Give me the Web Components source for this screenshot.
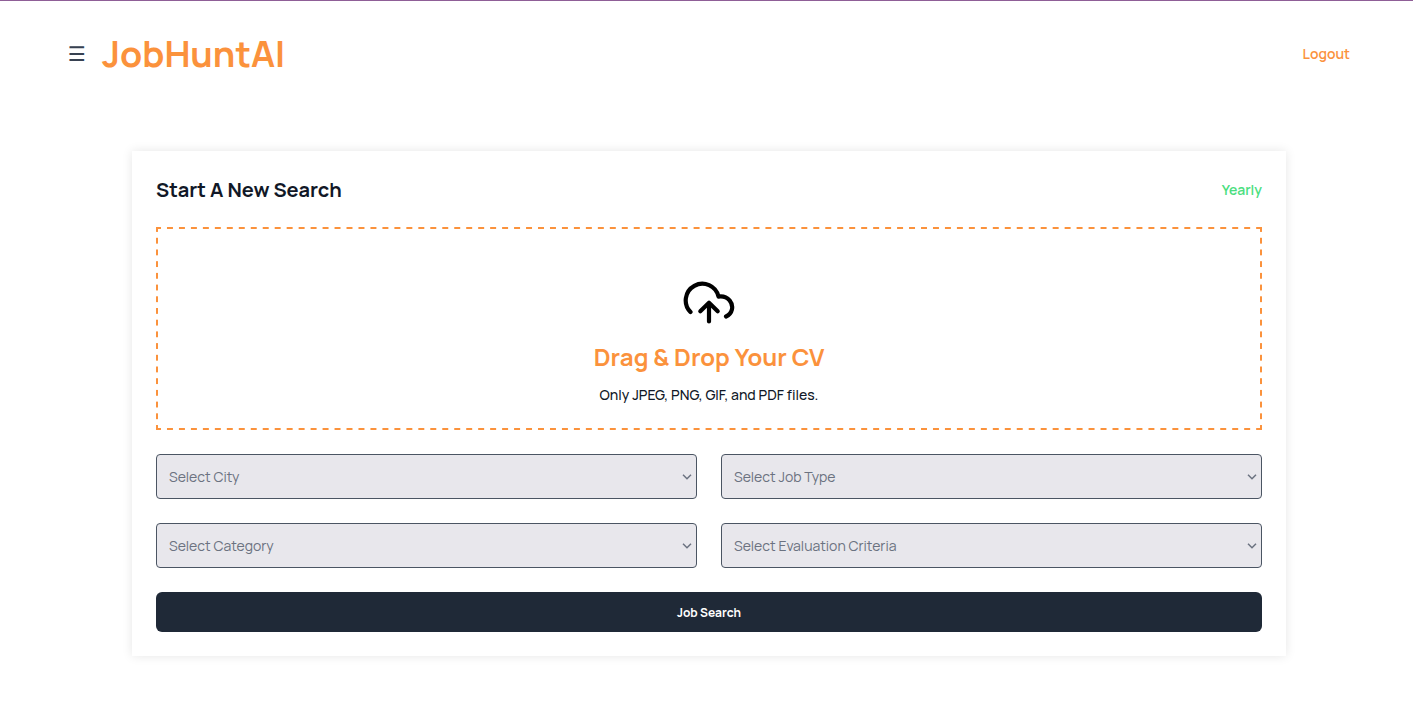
<!DOCTYPE html>
<html lang="en">
<head>
<meta charset="utf-8">
<meta name="viewport" content="width=device-width, initial-scale=1">
<title>JobHuntAI</title>
<style>
  :root {
    --orange: #fb923c;
    --green: #4ade80;
    --ink: #111827;
    --slate: #1f2937;
    --border: #4b5563;
    --muted: #6b7280;
    --field: #e8e7ec;
  }
  body {
    margin: 0;
    background: #fff;
    color: var(--ink);
    font: 14px/20px Manrope, Inter, "Liberation Sans", sans-serif;
  }
</style>
</head>
<body>
<job-app></job-app>
<script>
  const define = (name, html, setup) => {
    const template = document.createElement('template');
    template.innerHTML = '<style>*{box-sizing:border-box}</style>' + html;
    customElements.define(name, class extends HTMLElement {
      constructor() {
        super();
        this.attachShadow({ mode: 'open' }).append(template.content.cloneNode(true));
      }
      connectedCallback() {
        if (setup) setup(this, this.shadowRoot);
      }
    });
  };

  define('app-header', `
    <style>
      :host { display: block; }
      header { display: flex; align-items: center; justify-content: space-between; padding: 33px 63px 33px 64px; }
      .brand { display: flex; align-items: center; gap: 16px; }
      button { border: 0; padding: 0 0 0 4px; background: none; color: #374151; font: 20px/28px "DejaVu Sans", sans-serif; cursor: pointer; }
      h1 { margin: 0; font-size: 36px; line-height: 40px; font-weight: 700; color: var(--orange); }
      a { color: var(--orange); font-weight: 600; text-decoration: none; }
    </style>
    <header>
      <div class="brand">
        <button type="button" aria-label="Open menu">☰</button>
        <h1>JobHuntAI</h1>
      </div>
      <a href="#logout">Logout</a>
    </header>`);

  define('search-card', `
    <style>
      :host { display: block; padding: 24px; background: #fff; box-shadow: 0 0 10px rgba(0, 0, 0, 0.1); }
      .head { display: flex; align-items: center; justify-content: space-between; margin-bottom: 22px; }
      h2 { margin: 0; font-size: 20px; line-height: 30px; font-weight: 700; }
      .plan { color: var(--green); font-weight: 600; }
      .body { display: grid; gap: 24px; }
    </style>
    <div class="head"><h2><slot name="title"></slot></h2><span class="plan"><slot name="plan"></slot></span></div>
    <div class="body"><slot></slot></div>`);

  define('drop-zone', `
    <style>
      :host { display: block; }
      label {
        --row: linear-gradient(90deg, var(--orange) 25%, transparent 25% 75%, var(--orange) 75%);
        --col: linear-gradient(var(--orange) 25%, transparent 25% 75%, var(--orange) 75%);
        position: relative;
        display: flex; flex-direction: column; align-items: center;
        padding: 52px 16px 23px;
        border: 2px solid transparent;
        background-image: var(--row), var(--row), var(--col), var(--col);
        background-size: 12px 2px, 12px 2px, 2px 12px, 2px 12px;
        background-position: 0 -2px, 0 calc(100% + 2px), -2px 0, calc(100% + 2px) 0;
        background-repeat: round no-repeat, round no-repeat, no-repeat round, no-repeat round;
        background-origin: padding-box;
        background-clip: border-box;
        font-weight: 500; text-align: center; cursor: pointer;
      }
      input { position: absolute; inset: 0; width: 100%; height: 100%; opacity: 0; cursor: pointer; }
      svg { display: block; margin-bottom: 16px; }
      .title { margin-bottom: 12px; font-size: 24px; line-height: 32px; font-weight: 700; color: var(--orange); }
    </style>
    <label>
      <svg width="52" height="44" viewBox="0 0 52 44" fill="none" stroke="#000" stroke-width="4.2" stroke-linecap="round" stroke-linejoin="round" aria-hidden="true">
        <path d="M7.5 31A16.6 16.6 0 1 1 35.5 15.6C40 15 44 16.4 46.6 19.4C51.2 25 49.4 32.6 43 35.5"/>
        <path d="M26 40.5V22M17.3 30.2L26 21.7L34.7 30.2"/>
      </svg>
      <span class="title">Drag &amp; Drop Your CV</span>
      <span>Only JPEG, PNG, GIF, and PDF files.</span>
      <input type="file" accept=".jpeg,.jpg,.png,.gif,.pdf">
    </label>`);

  define('select-field', `
    <style>
      :host { display: grid; align-items: center; min-width: 0; }
      select, svg { grid-area: 1 / 1; }
      select { appearance: none; width: 100%; height: 45px; padding: 0 12px; border: 1px solid var(--border); border-radius: 4px; background: var(--field); color: var(--muted); font: inherit; }
      svg { justify-self: end; margin-right: 5px; pointer-events: none; }
    </style>
    <select><option></option></select>
    <svg width="10" height="6" viewBox="0 0 10 6" fill="none" stroke="#6b7280" stroke-width="1.5" aria-hidden="true"><path d="M1 .8L5 4.8L9 .8"/></svg>`,
    (host, root) => {
      const text = host.getAttribute('label');
      root.querySelector('option').textContent = text;
      root.querySelector('select').setAttribute('aria-label', text);
    });

  define('submit-button', `
    <style>
      :host { display: block; }
      button { display: block; width: 100%; height: 40px; padding: 2px 16px 0; border: 0; border-radius: 6px; background: var(--slate); color: #fff; font: inherit; font-size: 12px; line-height: 16px; font-weight: 700; cursor: pointer; }
    </style>
    <button type="button"><slot></slot></button>`);

  define('job-app', `
    <style>
      :host { display: block; border-top: 1px solid #8f5f97; }
      main { padding: 44px 127px 47px 132px; }
      form { display: contents; }
      .fields { display: grid; grid-template-columns: 1fr 1fr; gap: 24px; }
    </style>
    <app-header></app-header>
    <main>
      <search-card>
        <span slot="title">Start A New Search</span>
        <span slot="plan">Yearly</span>
        <form>
          <drop-zone></drop-zone>
          <div class="fields">
            <select-field label="Select City"></select-field>
            <select-field label="Select Job Type"></select-field>
            <select-field label="Select Category"></select-field>
            <select-field label="Select Evaluation Criteria"></select-field>
          </div>
          <submit-button>Job Search</submit-button>
        </form>
      </search-card>
    </main>`);
</script>
</body>
</html>
